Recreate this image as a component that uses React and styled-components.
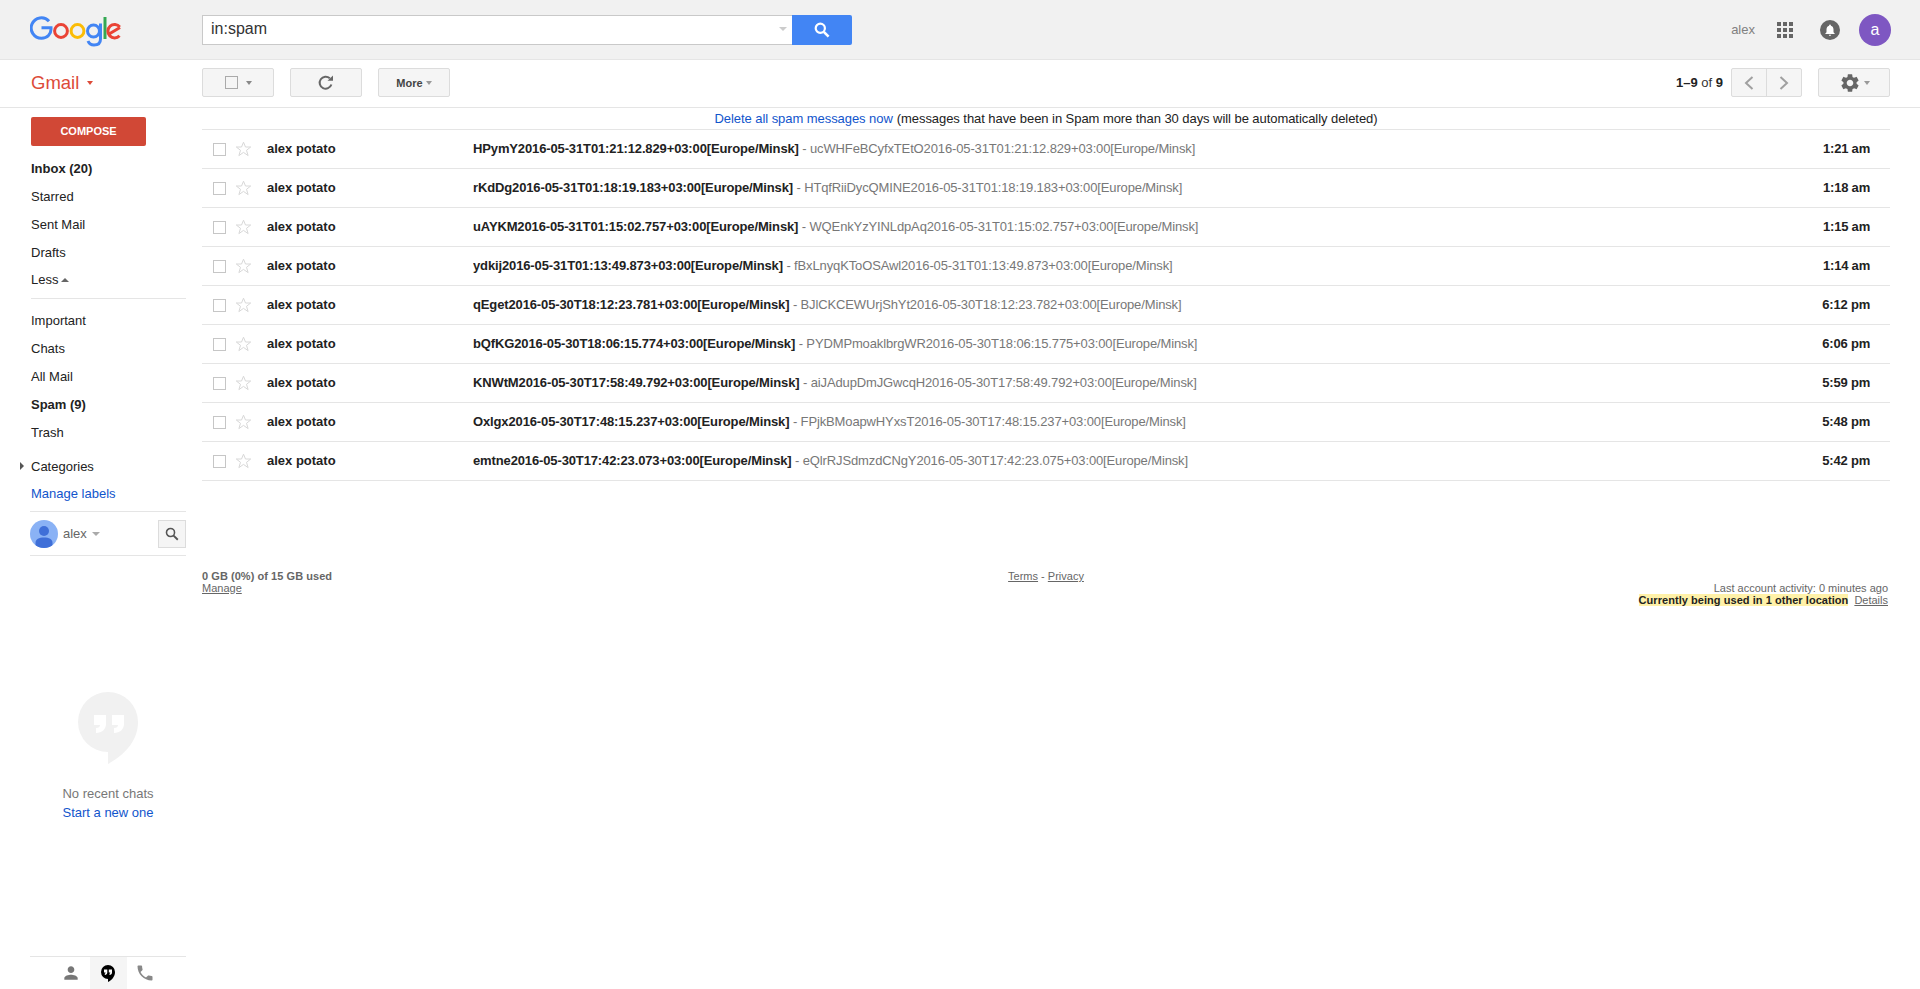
import React from 'react';
import styled, { createGlobalStyle } from 'styled-components';
import { MdSettings, MdPhone, MdPerson, MdNotifications } from 'react-icons/md';

const Global = createGlobalStyle`
  html, body { margin: 0; padding: 0; height: 100%; overflow: hidden; background: #fff; }
  body { font-family: "Liberation Sans", Arial, sans-serif; font-size: 13px; color: #222; }
  * { box-sizing: border-box; }
`;

const Page = styled.div`
  width: 1920px;
  height: 989px;
  display: flex;
  flex-direction: column;
  overflow: hidden;
`;

const Header = styled.header`
  height: 60px;
  flex: none;
  background: #f1f1f1;
  border-bottom: 1px solid #e5e5e5;
  display: flex;
  align-items: center;
  padding: 0 29px 0 30px;
`;
const LogoBox = styled.div`
  width: 172px;
  height: 60px;
  padding-top: 16px;
  flex: none;
`;
const SearchForm = styled.div`
  display: flex;
  width: 650px;
  height: 30px;
`;
const SearchInput = styled.div`
  width: 590px;
  height: 30px;
  background: #fff;
  border: 1px solid #c9c9c9;
  border-right: none;
  display: flex;
  align-items: center;
  justify-content: space-between;
  padding: 0 5px 2px 8px;
  font-size: 16px;
  color: #333;
`;
const Caret = styled.span`
  display: inline-block;
  width: 0;
  height: 0;
  flex: none;
  border-left: ${p => p.$w || 3}px solid transparent;
  border-right: ${p => p.$w || 3}px solid transparent;
  border-top: ${p => p.$h || 4}px solid ${p => p.$color || '#888'};
`;
const CaretUp = styled(Caret)`
  border-top: none;
  border-bottom: ${p => p.$h || 4}px solid ${p => p.$color || '#666'};
`;
const CaretRight = styled.span`
  display: inline-block;
  width: 0;
  height: 0;
  flex: none;
  border-top: 4px solid transparent;
  border-bottom: 4px solid transparent;
  border-left: 4px solid #555;
`;
const SearchButton = styled.div`
  width: 60px;
  height: 30px;
  background: #4285f4;
  border-radius: 0 2px 2px 0;
  display: flex;
  align-items: center;
  justify-content: center;
`;
const HeaderRight = styled.div`
  margin-left: auto;
  display: flex;
  align-items: center;
`;
const HeaderName = styled.span`
  font-size: 13px;
  color: #808080;
  margin-right: 22px;
`;
const AppsGrid = styled.div`
  display: grid;
  grid-template-columns: repeat(3, 4px);
  grid-auto-rows: 4px;
  gap: 2px;
  margin-right: 27px;
`;
const AppsDot = styled.span`
  background: #666;
`;
const Bell = styled.div`
  width: 20px;
  height: 20px;
  border-radius: 50%;
  background: #666;
  display: flex;
  align-items: center;
  justify-content: center;
  margin-right: 19px;
`;
const Avatar = styled.div`
  width: 32px;
  height: 32px;
  border-radius: 50%;
  background: #7e57c2;
  color: #fff;
  font-size: 16px;
  display: flex;
  align-items: center;
  justify-content: center;
`;

const Toolbar = styled.div`
  height: 48px;
  flex: none;
  border-bottom: 1px solid #e5e5e5;
  display: flex;
  align-items: center;
  padding: 0 30px 2px 31px;
`;
const GmailMenu = styled.div`
  width: 171px;
  display: flex;
  align-items: center;
  gap: 8px;
  color: #dd4b39;
  font-size: 18.5px;
  padding-top: 1px;
`;
const ToolGroup = styled.div`
  display: flex;
  gap: 16px;
`;
const ToolButton = styled.div`
  width: ${p => p.$w || 72}px;
  height: 29px;
  background: #f5f5f5;
  border: 1px solid #dcdcdc;
  border-radius: 2px;
  display: flex;
  align-items: center;
  justify-content: center;
  gap: ${p => p.$gap || 0}px;
  font-size: 11px;
  font-weight: bold;
  color: #444;
`;
const MiniCheck = styled.span`
  width: 13px;
  height: 13px;
  border: 1px solid #aaa;
  background: #f5f5f5;
  flex: none;
`;
const PagerWrap = styled.div`
  margin-left: auto;
  display: flex;
  align-items: center;
`;
const PagerText = styled.span`
  font-size: 13px;
  color: #333;
  margin-right: 8px;
  b { font-weight: bold; color: #222; }
`;
const Pager = styled.div`
  display: flex;
  width: 71px;
  height: 29px;
  background: #f5f5f5;
  border: 1px solid #dcdcdc;
  border-radius: 2px;
  margin-right: 16px;
`;
const PagerCell = styled.div`
  flex: 1;
  display: flex;
  align-items: center;
  justify-content: center;
  & + & { border-left: 1px solid #dcdcdc; }
`;

const Body = styled.div`
  flex: 1;
  min-height: 0;
  display: flex;
`;
const Sidebar = styled.aside`
  width: 202px;
  flex: none;
  padding: 9px 16px 0 30px;
  display: flex;
  flex-direction: column;
`;
const Compose = styled.div`
  width: 115px;
  height: 29px;
  margin-left: 1px;
  margin-bottom: 8px;
  padding-bottom: 1px;
  flex: none;
  background: #d14836;
  border-radius: 2px;
  color: #fff;
  font-size: 11px;
  font-weight: bold;
  display: flex;
  align-items: center;
  justify-content: center;
`;
const NavItem = styled.div`
  height: ${p => p.$h || 28}px;
  flex: none;
  padding-left: 1px;
  display: flex;
  align-items: center;
  gap: 3px;
  font-size: 13px;
  color: ${p => (p.$link ? '#15c' : '#222')};
  font-weight: ${p => (p.$bold ? 'bold' : 'normal')};
`;
const NavRule = styled.div`
  height: 1px;
  background: #e5e5e5;
  margin: 5px 0 7px 1px;
  flex: none;
`;
const CategoryArrow = styled.span`
  display: inline-flex;
  margin-left: -11px;
  margin-right: 4px;
`;
const NavSpacer = styled.div`
  height: 6px;
  flex: none;
`;
const UserRow = styled.div`
  margin-top: 4px;
  height: 45px;
  flex: none;
  border-top: 1px solid #e5e5e5;
  border-bottom: 1px solid #e5e5e5;
  display: flex;
  align-items: center;
  justify-content: space-between;
`;
const UserInfo = styled.div`
  display: flex;
  align-items: center;
  gap: 5px;
  color: #666;
  font-size: 13px;
`;
const UserPic = styled.div`
  width: 28px;
  height: 28px;
  border-radius: 50%;
  overflow: hidden;
  flex: none;
`;
const ChatSearch = styled.div`
  width: 28px;
  height: 28px;
  background: #f5f5f5;
  border: 1px solid #dcdcdc;
  display: flex;
  align-items: center;
  justify-content: center;
`;
const ChatEmpty = styled.div`
  margin-top: 136px;
  display: flex;
  flex-direction: column;
  align-items: center;
  font-size: 13px;
  color: #777;
`;
const ChatLine = styled.div`
  line-height: 19px;
  color: ${p => (p.$link ? '#15c' : '#777')};
  margin-top: ${p => p.$top || 0}px;
`;
const ChatTabs = styled.div`
  margin-top: auto;
  height: 33px;
  flex: none;
  border-top: 1px solid #e5e5e5;
  display: flex;
  justify-content: center;
`;
const ChatTab = styled.div`
  width: 37px;
  display: flex;
  align-items: center;
  justify-content: center;
  background: ${p => (p.$active ? '#f5f5f5' : 'transparent')};
`;

const Main = styled.main`
  flex: 1;
  min-width: 0;
  padding-right: 30px;
  display: flex;
  flex-direction: column;
`;
const Notice = styled.div`
  height: 21px;
  flex: none;
  display: flex;
  align-items: center;
  justify-content: center;
  gap: 4px;
  font-size: 13px;
  letter-spacing: -0.06px;
  color: #222;
`;
const NoticeLink = styled.span`
  color: #15c;
`;
const List = styled.div`
  border-top: 1px solid #e5e5e5;
`;
const Row = styled.div`
  height: 39px;
  display: grid;
  grid-template-columns: 65px 206px 1fr 80px;
  align-items: center;
  border-bottom: 1px solid #e5e5e5;
  font-size: 13px;
  padding-bottom: 1px;
`;
const RowMarks = styled.div`
  display: flex;
  align-items: center;
  gap: 9px;
  padding-left: 11px;
  padding-top: 1px;
`;
const RowCheck = styled.span`
  width: 13px;
  height: 13px;
  border: 1px solid #c6c6c6;
  flex: none;
`;
const Sender = styled.div`
  font-weight: bold;
  color: #222;
`;
const Subject = styled.div`
  white-space: nowrap;
  overflow: hidden;
`;
const SubjectMain = styled.span`
  font-weight: bold;
  color: #222;
  letter-spacing: -0.13px;
`;
const Snippet = styled.span`
  color: #777;
  letter-spacing: -0.13px;
`;
const Time = styled.div`
  font-weight: bold;
  color: #222;
  text-align: right;
  padding-right: 20px;
  white-space: nowrap;
  letter-spacing: -0.2px;
`;
const Footer = styled.footer`
  margin-top: 89px;
  display: grid;
  grid-template-columns: 1fr 1fr 1fr;
  font-size: 11px;
  line-height: 12px;
  color: #666;
`;
const FooterLeft = styled.div``;
const FooterCenter = styled.div`
  text-align: center;
`;
const FooterRight = styled.div`
  text-align: right;
  padding: 12px 2px 0 0;
`;
const Strong = styled.div`
  font-weight: bold;
  letter-spacing: 0.05px;
`;
const FootLink = styled.span`
  text-decoration: underline;
  color: #666;
`;
const Highlight = styled.span`
  background: #fff1a8;
  color: #222;
  font-weight: bold;
  letter-spacing: 0.05px;
  margin-right: 6px;
`;

const GoogleLogo = () => (
  <svg width="92" height="31" viewBox="0 0 92 31" fill="none" role="img" aria-label="Google">
    <path d="M19 5.2A10.2 10.2 0 1 0 11.5 22.2C17.5 22.2 21 18 21 13.2V11.8H11.5" stroke="#4285f4" strokeWidth="3" />
    <circle cx="31" cy="15" r="6.4" stroke="#ea4335" strokeWidth="3" />
    <circle cx="47.5" cy="15" r="6.4" stroke="#fbbc05" strokeWidth="3" />
    <circle cx="63.5" cy="15" r="6" stroke="#4285f4" strokeWidth="3" />
    <path d="M70.5 7.5V23C70.5 27 68 29 64 29C61 29 59 27.5 58 25" stroke="#4285f4" strokeWidth="3" />
    <path d="M75 1V23" stroke="#34a853" strokeWidth="3" />
    <path d="M90 11.5L79.5 17.8M89.5 19.8A6.7 6.7 0 1 1 89.8 11" stroke="#ea4335" strokeWidth="3" />
  </svg>
);

const SearchGlyph = ({ color = '#fff', size = 16, sw = 2.2 }) => (
  <svg width={size} height={size} viewBox="0 0 16 16" fill="none">
    <circle cx="6.3" cy="6.3" r="4.6" stroke={color} strokeWidth={sw} />
    <path d="M9.8 9.8L14.6 14.6" stroke={color} strokeWidth={sw + 0.4} />
  </svg>
);

const RefreshGlyph = () => (
  <svg width="16" height="16" viewBox="0 0 16 16" fill="none">
    <path d="M13.4 9.5A6 6 0 1 1 11.8 3.3" stroke="#666" strokeWidth="2" />
    <path d="M9.5 5.8H15V0.5Z" fill="#666" />
  </svg>
);

const Chevron = ({ dir }) => (
  <svg width="10" height="14" viewBox="0 0 10 14" fill="none">
    <path d={dir === 'left' ? 'M8.5 1L2 7L8.5 13' : 'M1.5 1L8 7L1.5 13'} stroke="#a0a0a0" strokeWidth="2" />
  </svg>
);

const Star = () => (
  <svg width="17" height="16" viewBox="0 0 17 16" fill="none">
    <path d="M8.5 1.2L10.5 6H15.7L11.5 9.3L13.1 14.6L8.5 11.4L3.9 14.6L5.5 9.3L1.3 6H6.5Z" stroke="#d8d8d8" strokeWidth="1" />
  </svg>
);

const UserGlyph = () => (
  <svg width="28" height="28" viewBox="0 0 28 28">
    <rect width="28" height="28" fill="#8ab2f5" />
    <circle cx="14" cy="11" r="5" fill="#3f6fd8" />
    <path d="M5.5 28V23C5.5 19 9 17.5 14 17.5S22.5 19 22.5 23V28Z" fill="#3f6fd8" />
  </svg>
);

const BigBubble = () => (
  <svg width="60" height="72" viewBox="0 0 60 72">
    <path d="M30 0A30 30 0 0 0 30 60V72C48 62 60 48 60 30A30 30 0 0 0 30 0Z" fill="#f1f1f1" />
    <path d="M16 23H28V32C28 37 24 41 18 41V36C20.5 36 22 35 22 33H16Z" fill="#fff" />
    <path d="M34 23H46V32C46 37 42 41 36 41V36C38.5 36 40 35 40 33H34Z" fill="#fff" />
  </svg>
);

const SmallBubble = () => (
  <svg width="14" height="17" viewBox="0 0 14 17">
    <path d="M7 0A7 7 0 0 0 7 14V17C11 15 14 11.5 14 7A7 7 0 0 0 7 0Z" fill="#000" />
    <path d="M3 4.5H6.3V7.5C6.3 9 5.3 10 3.8 10V8.5C4.3 8.5 4.6 8 4.6 7.5H3Z" fill="#fff" />
    <path d="M7.8 4.5H11V7.5C11 9 10 10 8.5 10V8.5C9 8.5 9.3 8 9.3 7.5H7.8Z" fill="#fff" />
  </svg>
);

const messages = [
  ['HPymY2016-05-31T01:21:12.829', 'ucWHFeBCyfxTEtO2016-05-31T01:21:12.829', '1:21 am'],
  ['rKdDg2016-05-31T01:18:19.183', 'HTqfRiiDycQMINE2016-05-31T01:18:19.183', '1:18 am'],
  ['uAYKM2016-05-31T01:15:02.757', 'WQEnkYzYINLdpAq2016-05-31T01:15:02.757', '1:15 am'],
  ['ydkij2016-05-31T01:13:49.873', 'fBxLnyqKToOSAwl2016-05-31T01:13:49.873', '1:14 am'],
  ['qEget2016-05-30T18:12:23.781', 'BJlCKCEWUrjShYt2016-05-30T18:12:23.782', '6:12 pm'],
  ['bQfKG2016-05-30T18:06:15.774', 'PYDMPmoaklbrgWR2016-05-30T18:06:15.775', '6:06 pm'],
  ['KNWtM2016-05-30T17:58:49.792', 'aiJAdupDmJGwcqH2016-05-30T17:58:49.792', '5:59 pm'],
  ['Oxlgx2016-05-30T17:48:15.237', 'FPjkBMoapwHYxsT2016-05-30T17:48:15.237', '5:48 pm'],
  ['emtne2016-05-30T17:42:23.073', 'eQlrRJSdmzdCNgY2016-05-30T17:42:23.075', '5:42 pm'],
];
const ZONE = '+03:00[Europe/Minsk]';

export default function App() {
  return (
    <Page>
      <Global />
      <Header>
        <LogoBox><GoogleLogo /></LogoBox>
        <SearchForm>
          <SearchInput>
            <span>in:spam</span>
            <Caret $w={4} $h={4} $color="#ccc" />
          </SearchInput>
          <SearchButton><SearchGlyph /></SearchButton>
        </SearchForm>
        <HeaderRight>
          <HeaderName>alex</HeaderName>
          <AppsGrid>
            {Array.from({ length: 9 }, (_, i) => <AppsDot key={i} />)}
          </AppsGrid>
          <Bell><MdNotifications size={14} color="#fff" /></Bell>
          <Avatar>a</Avatar>
        </HeaderRight>
      </Header>
      <Toolbar>
        <GmailMenu>Gmail <Caret $color="#dd4b39" /></GmailMenu>
        <ToolGroup>
          <ToolButton $gap={8}><MiniCheck /><Caret $w={3.5} /></ToolButton>
          <ToolButton><RefreshGlyph /></ToolButton>
          <ToolButton $gap={3}>More <Caret $w={3.5} $color="#999" /></ToolButton>
        </ToolGroup>
        <PagerWrap>
          <PagerText><b>1–9</b> of <b>9</b></PagerText>
          <Pager>
            <PagerCell><Chevron dir="left" /></PagerCell>
            <PagerCell><Chevron dir="right" /></PagerCell>
          </Pager>
          <ToolButton $gap={3}><MdSettings size={22} color="#666" /><Caret $w={3.5} $color="#999" /></ToolButton>
        </PagerWrap>
      </Toolbar>
      <Body>
        <Sidebar>
          <Compose>COMPOSE</Compose>
          <NavItem $bold>Inbox (20)</NavItem>
          <NavItem>Starred</NavItem>
          <NavItem>Sent Mail</NavItem>
          <NavItem>Drafts</NavItem>
          <NavItem $h={27}>Less <CaretUp $w={4} /></NavItem>
          <NavRule />
          <NavItem>Important</NavItem>
          <NavItem>Chats</NavItem>
          <NavItem>All Mail</NavItem>
          <NavItem $bold>Spam (9)</NavItem>
          <NavItem>Trash</NavItem>
          <NavSpacer />
          <NavItem><CategoryArrow><CaretRight /></CategoryArrow>Categories</NavItem>
          <NavItem $h={27} $link>Manage labels</NavItem>
          <UserRow>
            <UserInfo>
              <UserPic><UserGlyph /></UserPic>
              alex
              <Caret $w={4} $h={4} $color="#aaa" />
            </UserInfo>
            <ChatSearch><SearchGlyph color="#555" size={14} sw={1.8} /></ChatSearch>
          </UserRow>
          <ChatEmpty>
            <BigBubble />
            <ChatLine $top={20}>No recent chats</ChatLine>
            <ChatLine $link>Start a new one</ChatLine>
          </ChatEmpty>
          <ChatTabs>
            <ChatTab><MdPerson size={20} color="#777" /></ChatTab>
            <ChatTab $active><SmallBubble /></ChatTab>
            <ChatTab><MdPhone size={20} color="#888" /></ChatTab>
          </ChatTabs>
        </Sidebar>
        <Main>
          <Notice>
            <NoticeLink>Delete all spam messages now</NoticeLink>
            <span>(messages that have been in Spam more than 30 days will be automatically deleted)</span>
          </Notice>
          <List>
            {messages.map(([subject, snippet, time]) => (
              <Row key={subject}>
                <RowMarks><RowCheck /><Star /></RowMarks>
                <Sender>alex potato</Sender>
                <Subject>
                  <SubjectMain>{subject}{ZONE}</SubjectMain>
                  <Snippet> - {snippet}{ZONE}</Snippet>
                </Subject>
                <Time>{time}</Time>
              </Row>
            ))}
          </List>
          <Footer>
            <FooterLeft>
              <Strong>0 GB (0%) of 15 GB used</Strong>
              <FootLink>Manage</FootLink>
            </FooterLeft>
            <FooterCenter><FootLink>Terms</FootLink> - <FootLink>Privacy</FootLink></FooterCenter>
            <FooterRight>
              <div>Last account activity: 0 minutes ago</div>
              <Highlight>Currently being used in 1 other location</Highlight>
              <FootLink>Details</FootLink>
            </FooterRight>
          </Footer>
        </Main>
      </Body>
    </Page>
  );
}
